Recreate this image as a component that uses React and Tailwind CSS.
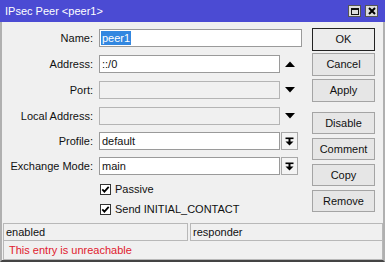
import React from 'react';

const FONT = { fontFamily: '"Liberation Sans", Arial, sans-serif' };

function UpArrow() {
  return (
    <svg width="10" height="6" viewBox="0 0 10 6" className="ml-[5px]">
      <path d="M0 6 L5 0.5 L10 6 Z" fill="#000" />
    </svg>
  );
}

function DownArrow() {
  return (
    <svg width="10" height="6" viewBox="0 0 10 6" className="ml-[5px]">
      <path d="M0 0 L5 5.5 L10 0 Z" fill="#000" />
    </svg>
  );
}

function DropButton() {
  return (
    <div className="ml-[1px] flex h-[18px] w-[17px] items-center justify-center border border-[#a8a8a8] bg-[#f4f4f4]">
      <svg width="9" height="9" viewBox="0 0 9 9">
        <rect x="0.5" y="0.5" width="8" height="1.6" fill="#000" />
        <rect x="3.5" y="2" width="2" height="3" fill="#000" />
        <path d="M0.5 4.5 L4.5 8.5 L8.5 4.5 Z" fill="#000" />
      </svg>
    </div>
  );
}

function Field({ label, value, disabled, wide, after, mt, selected }) {
  return (
    <div className={`flex h-[18px] items-center ${mt}`}>
      <div className="w-[91px] text-right text-[11px] text-[#111]">{label}</div>
      <div
        className={`ml-[6px] flex h-[18px] items-center border border-[#9a9a9a] px-[1px] text-[11px] text-[#111] ${
          wide ? 'w-[203px]' : 'w-[181px]'
        } ${disabled ? 'bg-[#f0f0f0] border-[#b4b4b4]' : 'bg-white'}`}
      >
        {selected ? (
          <span className="bg-[#3287e0] px-[1px] leading-[14px] text-white">{value}</span>
        ) : (
          <span className="px-[1px]">{value}</span>
        )}
      </div>
      {after}
    </div>
  );
}

function Check({ label, mt }) {
  return (
    <div className={`flex h-[13px] items-center pl-[98px] ${mt}`}>
      <svg width="11" height="11" viewBox="0 0 11 11">
        <rect x="0.5" y="0.5" width="10" height="10" fill="#fff" stroke="#333" />
        <path d="M2.3 5.4 L4.4 7.6 L8.7 2.9" fill="none" stroke="#000" strokeWidth="1.8" />
      </svg>
      <span className="ml-[4px] text-[11px] text-[#111]">{label}</span>
    </div>
  );
}

function Btn({ children, mt, h = 'h-[22px]', focused }) {
  return (
    <div
      className={`flex w-[63px] items-center justify-center border text-[11px] text-[#111] ${h} ${mt} ${
        focused ? 'border-[#222] bg-[#ececec]' : 'border-[#a4a4a4] bg-[#e6e6e6]'
      }`}
    >
      {children}
    </div>
  );
}

export default function App() {
  return (
    <div className="h-[267px] w-[385px] bg-white" style={FONT}>
      <div className="flex h-[262px] w-[385px] flex-col">
        {/* title bar */}
        <div className="flex h-[22px] items-center bg-[#4b4bd3] pl-[5px] pr-[7px]">
          <span className="text-[11px] text-white">IPsec Peer &lt;peer1&gt;</span>
          <div className="ml-auto flex gap-[4px]">
            <div className="flex h-[12px] w-[13px] items-center justify-center border border-[#555] bg-[#dcdcdc]">
              <div className="h-[7px] w-[8px] border border-t-2 border-[#111]" />
            </div>
            <div className="flex h-[12px] w-[13px] items-center justify-center border border-[#555] bg-[#dcdcdc]">
              <svg width="8" height="8" viewBox="0 0 8 8">
                <path d="M1 1 L7 7 M7 1 L1 7" stroke="#000" strokeWidth="2" />
              </svg>
            </div>
          </div>
        </div>

        {/* body */}
        <div className="flex flex-1 flex-col border-x-2 border-b-2 border-x-[#b0b0b0] border-b-[#444] bg-[#f0f0f0]">
          <div className="flex">
            <div className="flex w-[310px] flex-col pt-[7px]">
              <Field label="Name:" value="peer1" wide selected />
              <Field label="Address:" value="::/0" mt="mt-[8px]" after={<UpArrow />} />
              <Field label="Port:" value="" disabled mt="mt-[8px]" after={<DownArrow />} />
              <Field label="Local Address:" value="" disabled mt="mt-[8px]" after={<DownArrow />} />
              <Field label="Profile:" value="default" mt="mt-[7px]" after={<DropButton />} />
              <Field label="Exchange Mode:" value="main" mt="mt-[7px]" after={<DropButton />} />
              <Check label="Passive" mt="mt-[8px]" />
              <Check label="Send INITIAL_CONTACT" mt="mt-[7px]" />
            </div>
            <div className="flex flex-col pt-[6px]">
              <Btn h="h-[23px]" focused>OK</Btn>
              <Btn h="h-[23px]" mt="mt-[2px]">Cancel</Btn>
              <Btn h="h-[23px]" mt="mt-[3px]">Apply</Btn>
              <Btn mt="mt-[10px]">Disable</Btn>
              <Btn mt="mt-[4px]">Comment</Btn>
              <Btn mt="mt-[4px]">Copy</Btn>
              <Btn mt="mt-[4px]">Remove</Btn>
            </div>
          </div>

          {/* status bar */}
          <div className="mt-[7px] flex flex-1 flex-col pl-[1px]">
            <div className="flex h-[18px]">
              <div className="flex w-[185px] items-center border border-[#b8b8b8] pl-[2px] text-[11px] text-[#111]">
                enabled
              </div>
              <div className="ml-[2px] flex flex-1 items-center border border-[#b8b8b8] pl-[2px] text-[11px] text-[#111]">
                responder
              </div>
            </div>
            <div className="flex flex-1 items-center border-x border-b border-[#b8b8b8] pl-[5px] text-[11px] text-[#e0202e]">
              This entry is unreachable
            </div>
          </div>
        </div>
      </div>
    </div>
  );
}
